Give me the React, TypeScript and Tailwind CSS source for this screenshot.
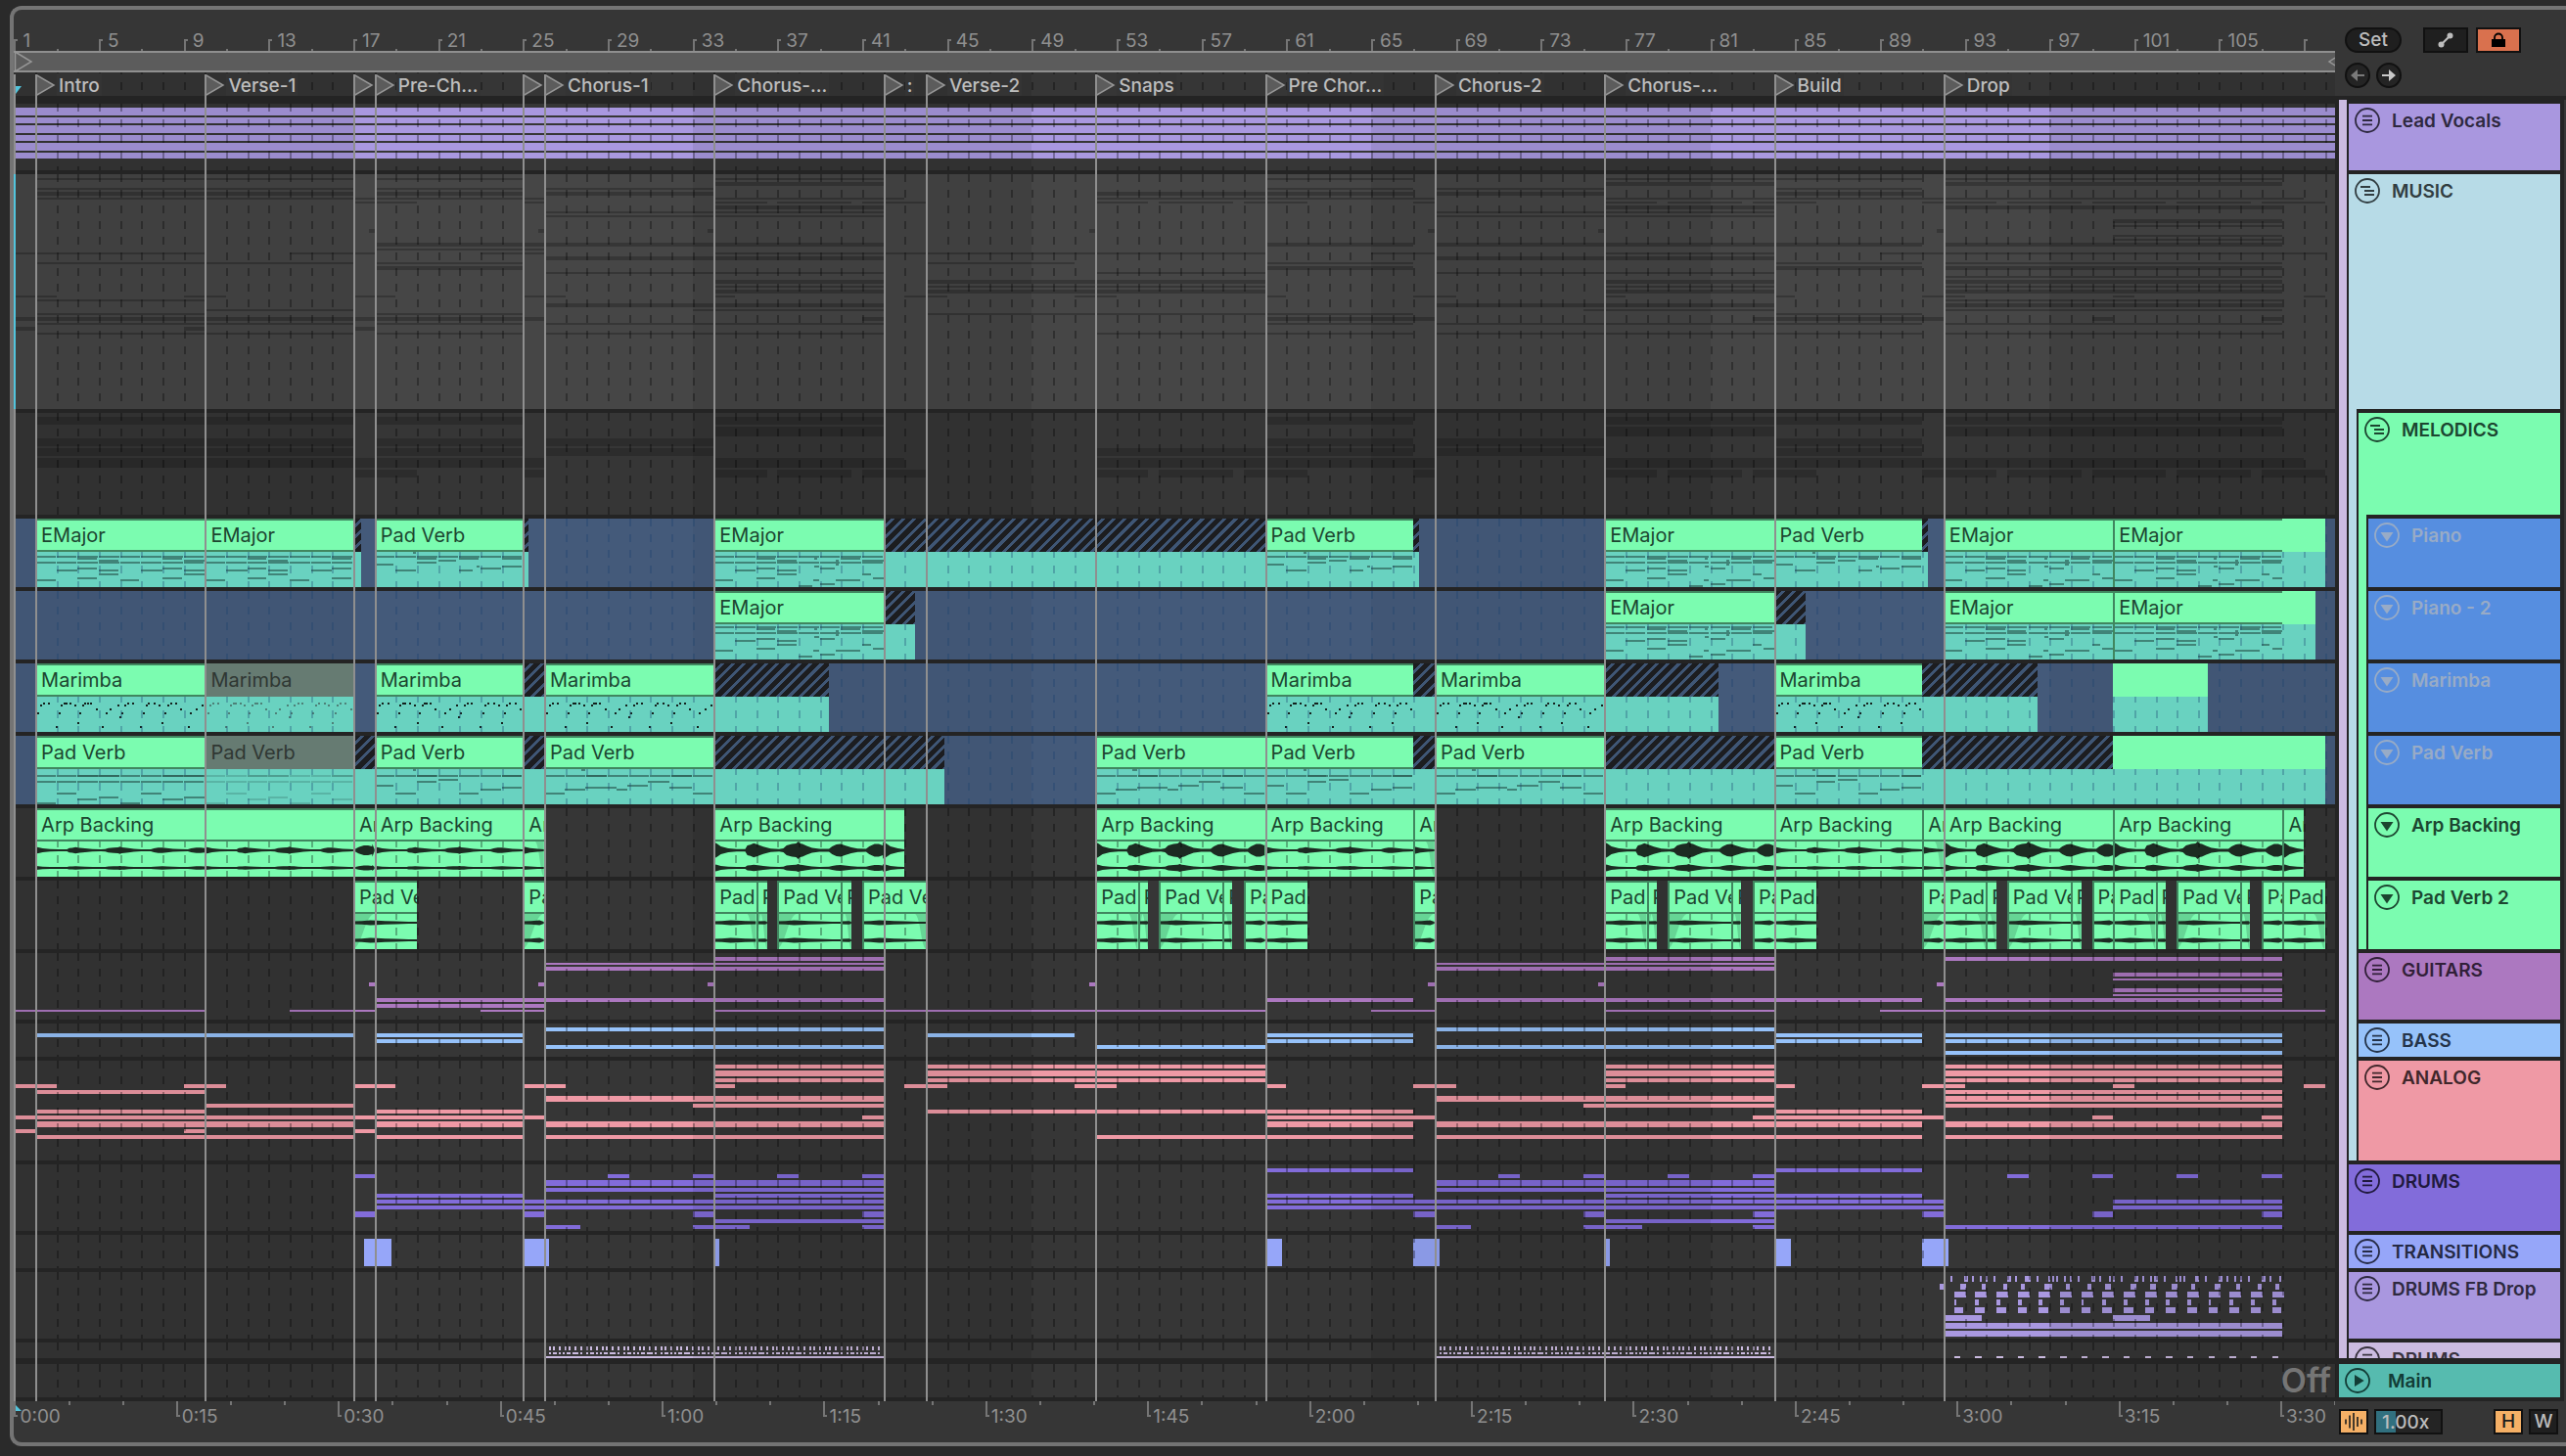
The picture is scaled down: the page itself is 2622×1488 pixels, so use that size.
import React from "react";

type Span = [number, number];
type Row = { y: number; h: number; spans: Span[] };

/* ------------------------------------------------------------------ */
/* Time scale                                                          */
/* ------------------------------------------------------------------ */

const VISIBLE_BARS = 109.49;
const PIXEL_BAR = 1 / 21.664;
const BARS_PER_15_SEC = 7.635;

const at = (bar: number) => `${((bar - 0.98) / VISIBLE_BARS) * 100}%`;
const wide = (bars: number) => `${(bars / VISIBLE_BARS) * 100}%`;
const range = (n: number) => Array.from({ length: n }, (_, i) => i);

const LOCATORS: { bar: number; name: string }[] = [
  { bar: 2, name: "Intro" },
  { bar: 10, name: "Verse-1" },
  { bar: 17, name: "" },
  { bar: 18, name: "Pre-Ch..." },
  { bar: 25, name: "" },
  { bar: 26, name: "Chorus-1" },
  { bar: 34, name: "Chorus-..." },
  { bar: 42, name: ":" },
  { bar: 44, name: "Verse-2" },
  { bar: 52, name: "Snaps" },
  { bar: 60, name: "Pre Chor..." },
  { bar: 68, name: "Chorus-2" },
  { bar: 76, name: "Chorus-..." },
  { bar: 84, name: "Build" },
  { bar: 92, name: "Drop" },
];

const SHADED: Span[] = [
  [0.97, 17],
  [33, 49],
  [65, 81],
  [97, 110.5],
];

/* ------------------------------------------------------------------ */
/* Overview data                                                       */
/* ------------------------------------------------------------------ */

const ALL: Span[] = [[0.97, 110.5]];

const VOCALS: Row[] = [
  { y: 4, h: 8, spans: ALL },
  { y: 14, h: 6, spans: ALL },
  { y: 22, h: 8, spans: ALL },
  { y: 32, h: 6, spans: ALL },
  { y: 40, h: 8, spans: ALL },
  { y: 50, h: 6, spans: ALL },
];

const PV2_SPANS: Span[] = [
  [17, 20], [25, 26], [34, 36.5], [37, 40.5], [41, 44], [52, 54.5], [55, 58.5], [59, 62], [67, 68],
  [76, 78.5], [79, 82.5], [83, 86], [91, 94.5], [95, 98.5], [99, 102.5], [103, 106.5], [107, 110],
];

const MELODICS: Row[] = [
  { y: 4, h: 8, spans: [[2, 17], [18, 25], [34, 42], [60, 67], [76, 91], [92, 108]] },
  { y: 14, h: 10, spans: [[34, 42], [76, 84], [92, 108]] },
  { y: 26, h: 8, spans: [[2, 17], [18, 25], [26, 34], [60, 67], [68, 76], [84, 91]] },
  { y: 36, h: 8, spans: [[2, 17], [18, 25], [26, 34], [52, 67], [68, 76], [84, 91]] },
  { y: 46, h: 10, spans: [[2, 26], [34, 43], [52, 68], [76, 109]] },
  { y: 58, h: 8, spans: PV2_SPANS },
];

const GUITARS: Row[] = [
  { y: 4, h: 4, spans: [[34, 42], [76, 84], [92, 108]] },
  { y: 10, h: 2, spans: [[26, 42], [68, 84]] },
  { y: 14, h: 4, spans: [[26, 42], [68, 84]] },
  { y: 20, h: 4, spans: [[100, 108]] },
  { y: 26, h: 2, spans: [[100, 108]] },
  { y: 30, h: 4, spans: [[17.75, 18], [25.7, 26], [33.7, 34], [51.7, 52], [67.7, 68], [75.7, 76], [91.7, 92]] },
  { y: 36, h: 4, spans: [[100, 108]] },
  { y: 42, h: 2, spans: [[100, 108]] },
  { y: 46, h: 4, spans: [[18, 42], [60, 67], [68, 91], [92, 108]] },
  { y: 52, h: 4, spans: [[18, 26]] },
  { y: 58, h: 2, spans: [[0.97, 10], [14, 18], [23, 26], [34, 60], [65, 68], [76, 84], [89, 110]] },
];

const BASS: Row[] = [
  { y: 4, h: 4, spans: [[26, 42], [68, 84]] },
  { y: 10, h: 4, spans: [[2, 17], [18, 25], [44, 51], [60, 67], [84, 91], [92, 108]] },
  { y: 16, h: 4, spans: [[18, 25], [60, 67], [84, 91], [92, 108]] },
  { y: 22, h: 4, spans: [[26, 42], [52, 60], [68, 84]] },
  { y: 28, h: 4, spans: [[92, 108]] },
];

const LEADS: Span[] = [[34, 42], [44, 60], [76, 84], [92, 108]];

const ANALOG: Row[] = [
  { y: 4, h: 4, spans: LEADS },
  { y: 10, h: 6, spans: LEADS },
  { y: 18, h: 4, spans: LEADS },
  {
    y: 24, h: 4,
    spans: [
      [0.97, 3], [9, 11], [17, 19], [25, 27], [34, 35], [43, 45], [51, 53], [60, 61], [67, 69], [76, 77],
      [84, 85], [91, 93], [100, 101], [109, 110],
    ],
  },
  { y: 30, h: 4, spans: [[2, 10], [92, 108]] },
  { y: 36, h: 6, spans: [[26, 42], [68, 84], [92, 108]] },
  { y: 44, h: 4, spans: [[10, 17], [33, 42], [75, 84], [92, 108]] },
  { y: 50, h: 4, spans: [[2, 10], [18, 25], [44, 67], [84, 91]] },
  { y: 56, h: 4, spans: [[0.97, 26], [41, 42], [60, 68], [83, 92], [99, 100], [107, 108]] },
  { y: 62, h: 6, spans: [[2, 17], [18, 25], [26, 42], [60, 67], [68, 91], [92, 108]] },
  { y: 70, h: 4, spans: [[0.97, 2], [9, 10], [17, 18]] },
  { y: 76, h: 4, spans: [[2, 17], [18, 25], [26, 42], [52, 67], [68, 91], [92, 108]] },
];

const DRUMS: Row[] = [
  { y: 4, h: 4, spans: [[60, 67], [84, 91]] },
  {
    y: 10, h: 4,
    spans: [
      [17, 18], [29, 30], [33, 34], [37, 38], [41, 42], [71, 72], [75, 76], [79, 80], [83, 84], [95, 96],
      [99, 100], [103, 104], [107, 108],
    ],
  },
  { y: 16, h: 6, spans: [[26, 42], [68, 84]] },
  { y: 24, h: 4, spans: [[26, 42], [68, 84]] },
  { y: 30, h: 4, spans: [[18, 25], [34, 42], [60, 67], [76, 91]] },
  { y: 36, h: 4, spans: [[18, 42], [60, 92], [100, 108]] },
  { y: 42, h: 4, spans: [[18, 42], [60, 92], [100, 108]] },
  {
    y: 48, h: 6,
    spans: [[17, 18], [25, 26], [33, 34], [41, 42], [67, 68], [75, 76], [83, 84], [91, 92], [99, 100], [107, 108]],
  },
  { y: 56, h: 4, spans: [[34, 42], [76, 84]] },
  { y: 62, h: 4, spans: [[26, 27.7], [33, 35.7], [41, 42], [68, 69.7], [75, 77.8], [83, 84], [92, 108]] },
];

const TRANSITIONS: Row[] = [
  {
    y: 4, h: 28,
    spans: [[17.5, 18.8], [25, 26.25], [34, 34.25], [60, 60.8], [67, 68.25], [76, 76.25], [84, 84.8], [91, 92.25]],
  },
];

const px = (start: number, list: number[][]): Span[] =>
  list.map(([x, w]) => [start + x * PIXEL_BAR, start + (x + w) * PIXEL_BAR]);

const FB_DROP: Row[] = [
  {
    y: 4, h: 6,
    spans: px(92, [
      [7, 2], [21, 4], [29, 2], [37, 2], [43, 2], [51, 2], [65, 4], [73, 2], [83, 6], [95, 2], [107, 2], [111, 2],
      [115, 2], [123, 2], [129, 2], [137, 2], [151, 4], [159, 2], [169, 2], [173, 2], [181, 2], [195, 4], [203, 2],
      [211, 2], [215, 4], [225, 2], [237, 2], [241, 2], [245, 2], [257, 4], [267, 2], [281, 4], [289, 2], [297, 2],
      [303, 2], [311, 2], [325, 4], [333, 2], [343, 2],
    ]),
  },
  {
    y: 12, h: 6,
    spans: px(92, [
      [-4, 4], [17, 6], [39, 4], [61, 4], [79, 4], [103, 8], [125, 4], [147, 4], [165, 6], [191, 6], [211, 6],
      [233, 6], [253, 4], [277, 6], [299, 4], [321, 4], [339, 4],
    ]),
  },
  { y: 20, h: 6, spans: range(16).map((i): Span => [92.5 + i, 93.05 + i]) },
  { y: 28, h: 6, spans: range(16).map((i): Span => [92.5 + i, (i % 6 === 0 ? 92.6 : 92.68) + i]) },
  { y: 36, h: 6, spans: range(16).map((i): Span => [92.5 + i, 92.95 + i]) },
  { y: 44, h: 6, spans: [[92, 93.8], [100, 101.75]] },
  { y: 52, h: 6, spans: [[92, 108]] },
  { y: 60, h: 6, spans: [[92, 108]] },
];

const hits = (start: number, pattern: number[][]): Span[] =>
  range(9).flatMap((k) =>
    px(start, pattern.map(([x, w]) => [5 + k * 38 + x, w]).filter(([x]) => x < 344))
  );

const TICKS = [[0, 2], [4, 2], [10, 2], [16, 2], [20, 2], [26, 2], [32, 2]];
const DOTS = [[0, 2], [4, 4], [10, 2], [14, 2], [18, 4], [24, 6], [32, 2]];

const DRUMS_2: Row[] = [
  { y: 4, h: 4, spans: [...hits(26, TICKS), ...hits(68, TICKS)] },
  { y: 10, h: 2, spans: [...hits(26, DOTS), ...hits(68, DOTS)] },
  { y: 14, h: 2, spans: [[26, 42], [68, 84], ...range(16).map((i): Span => [92.5 + i, 92.8 + i])] },
];

const MUSIC_OFFSETS: [number, number][] = [
  [4, 2], [8, 4], [14, 2], [18, 4], [24, 2], [28, 2],
  [32, 4], [38, 2], [42, 2], [46, 4], [52, 2], [56, 4], [62, 2], [66, 2], [70, 4], [76, 2], [80, 2],
  [84, 4], [90, 2], [94, 4], [100, 2], [104, 2],
  [108, 4], [114, 2], [118, 4], [124, 2], [128, 2], [132, 4], [138, 2], [142, 2], [146, 4], [152, 2], [156, 4],
  [162, 2],
];

const MUSIC: Row[] = [...MELODICS, ...GUITARS, ...BASS, ...ANALOG].map((row, i) => ({
  y: MUSIC_OFFSETS[i][0],
  h: MUSIC_OFFSETS[i][1],
  spans: row.spans,
}));

/* ------------------------------------------------------------------ */
/* Clip data                                                           */
/* ------------------------------------------------------------------ */

/** A note is [start bar, end bar, y]. */
type Note = [number, number, number];

const eachBar = (from: number, to: number, y: number): Note[] =>
  range(to - from).map((i): Note => [from + i, from + i + 0.95, y]);

const NOTES: Record<string, Note[]> = {
  verse: [
    ...eachBar(0, 8, 4), ...eachBar(0, 8, 10),
    [2, 2.9, 6], [6, 6.9, 6], [3, 3.9, 8], [7, 8, 8], [2, 2.9, 16], [6, 6.9, 16],
    [1, 2, 18], [3, 3.9, 18], [5, 6, 18], [7, 8, 18], [3, 3.9, 22], [7, 8, 22],
    [2, 2.9, 26], [6, 6.9, 26], [0, 0.95, 28], [4, 4.9, 28],
  ],
  chorus: [
    ...eachBar(0, 8, 4), ...eachBar(0, 8, 10),
    [2, 2.9, 6], [4.75, 4.9, 6], [6, 6.9, 6], [3, 3.9, 8], [5.75, 5.9, 8], [7, 8, 8],
    [4.75, 4.95, 14], [5.75, 5.9, 12], [2, 2.9, 16], [5, 5.7, 16], [1, 1.95, 18], [3, 3.9, 18],
    [3, 3.9, 22], [7, 7.4, 22], [2, 2.9, 26], [7.5, 8, 26],
    [0, 0.9, 28], [4.7, 4.95, 28], [5.75, 6.9, 28], [5, 5.7, 32], [4, 4.65, 34],
  ],
  pad: [
    ...eachBar(0, 7, 4), [2, 2.9, 6], [4, 4.9, 6], [6, 6.95, 6], [3, 3.85, 8], [2, 2.9, 10],
    [1.8, 1.95, 0], [0, 0.9, 12], [1, 1.95, 18], [4, 4.65, 18], [4.8, 4.95, 14], [5, 5.95, 16], [6, 6.95, 14],
  ],
  padIntro: [
    ...eachBar(0, 8, 6), ...eachBar(0, 8, 12), [2, 3.95, 6], [6, 8, 6],
    [1, 1.95, 24], [5, 5.95, 24], [2, 2.9, 30], [6, 6.95, 30], [3, 3.9, 28], [7, 8, 28], [0, 0.95, 34], [4, 4.95, 34],
  ],
  padPre: [
    ...eachBar(0, 7, 6), [1.8, 1.95, 0], [2, 2.9, 6], [6, 6.95, 6],
    [3, 3.95, 10], [2, 2.9, 12], [0, 0.9, 16], [1, 1.95, 24], [4, 4.9, 24], [5, 5.95, 20], [6, 6.95, 18],
  ],
  padChorus: [
    ...eachBar(0, 8, 6), [1.75, 1.95, 0], [2, 2.95, 6], [6, 6.95, 6],
    [0, 0.95, 24], [0.95, 1.95, 20], [1.95, 3.4, 18], [3.4, 3.9, 20], [3.9, 4.9, 16], [4.9, 5.9, 12],
    [5.9, 6.95, 18], [7, 7.95, 24],
  ],
};

/** Marimba hits over eight bars: [bar, y]. */
const MARIMBA_HITS: [number, number][] = [
  [0.1, 16], [0.22, 8], [0.35, 6], [0.6, 6], [0.95, 30],
  [1.1, 16], [1.18, 8], [1.32, 6], [1.42, 6], [1.62, 6], [1.85, 8], [1.98, 26],
  [2.08, 16], [2.22, 8], [2.32, 6], [2.42, 6], [2.6, 6], [2.85, 12], [3.15, 30],
  [3.3, 16], [3.5, 12], [3.85, 8], [3.95, 20],
  [4.05, 16], [4.2, 8], [4.35, 6], [4.55, 6], [4.93, 30],
  [5.08, 16], [5.2, 8], [5.32, 6], [5.6, 6], [5.82, 8], [5.97, 26],
  [6.1, 16], [6.22, 8], [6.35, 6], [6.6, 6], [6.85, 12], [7.2, 30],
  [7.3, 16], [7.55, 12], [7.85, 8],
];

type Kind = "clip" | "muted" | "hatch" | "plain";
type Clip = {
  s: number;
  e: number;
  name?: string;
  kind?: Kind;
  notes?: string;
  shift?: number;
  loud?: number;
  phase?: number;
  fadeIn?: number;
  fadeOut?: number;
};

const clip = (s: number, e: number, name: string, notes: string, shift = 0): Clip => ({ s, e, name, notes, shift });
const muted = (s: number, e: number, name: string, notes: string): Clip => ({ s, e, name, notes, kind: "muted" });
const hatch = (s: number, e: number): Clip => ({ s, e, kind: "hatch" });
const plain = (s: number, e: number): Clip => ({ s, e, kind: "plain" });
const arp = (s: number, e: number, loud: number, phase = 0, fadeOut = 0): Clip => ({
  s, e, name: "Arp Backing", loud, phase, fadeOut,
});
const pv = (s: number, e: number, fadeIn = 0, fadeOut = 0): Clip => ({
  s, e, name: "Pad Verb", loud: -1, fadeIn, fadeOut,
});

const PIANO: Clip[] = [
  clip(2, 10, "EMajor", "verse"), clip(10, 17, "EMajor", "verse"), hatch(17, 17.35),
  clip(18, 25, "Pad Verb", "pad"), hatch(25, 25.25),
  clip(34, 42, "EMajor", "chorus"), hatch(42, 60),
  clip(60, 67, "Pad Verb", "pad"), hatch(67, 67.25),
  clip(76, 84, "EMajor", "chorus"), clip(84, 91, "Pad Verb", "pad"), hatch(91, 91.25),
  clip(92, 100, "EMajor", "chorus"), clip(100, 108, "EMajor", "chorus"), plain(108, 110),
];

const PIANO_2: Clip[] = [
  clip(34, 42, "EMajor", "chorus", -2), hatch(42, 43.5),
  clip(76, 84, "EMajor", "chorus", -2), hatch(84, 85.5),
  clip(92, 100, "EMajor", "chorus", -2), clip(100, 108, "EMajor", "chorus", -2), plain(108, 109.55),
];

const MARIMBA: Clip[] = [
  clip(2, 10, "Marimba", "marimba"), muted(10, 17, "Marimba", "marimba"),
  clip(18, 25, "Marimba", "marimba"), hatch(25, 26),
  clip(26, 34, "Marimba", "marimba"), hatch(34, 39.45),
  clip(60, 67, "Marimba", "marimba"), hatch(67, 68),
  clip(68, 76, "Marimba", "marimba"), hatch(76, 81.4),
  clip(84, 91, "Marimba", "marimba"), hatch(91, 96.45), plain(100, 104.45),
];

const PAD_VERB: Clip[] = [
  clip(2, 10, "Pad Verb", "padIntro"), muted(10, 17, "Pad Verb", "padIntro"), hatch(17, 18),
  clip(18, 25, "Pad Verb", "padPre"), hatch(25, 26),
  clip(26, 34, "Pad Verb", "padChorus"), hatch(34, 44.9),
  clip(52, 60, "Pad Verb", "padChorus"), clip(60, 67, "Pad Verb", "padPre"), hatch(67, 68),
  clip(68, 76, "Pad Verb", "padChorus"), hatch(76, 84),
  clip(84, 91, "Pad Verb", "padPre"), hatch(91, 100), plain(100, 110),
];

const ARP: Clip[] = [
  arp(2, 17, 0.35), arp(17, 18, 0.75, 7.1), arp(18, 25, 0.35), arp(25, 26, 0.4, 0, 0.4),
  arp(34, 43, 1), arp(52, 60, 1), arp(60, 67, 0.35), arp(67, 68, 0.4, 0, 0.4),
  arp(76, 84, 1), arp(84, 91, 0.35), arp(91, 92, 0.4, 0, 0.4),
  arp(92, 100, 1), arp(100, 108, 1), arp(108, 109, 1),
];

const PAD_VERB_2: Clip[] = [
  pv(17, 20, 0.95), pv(25, 26, 0.95),
  pv(34, 36, 0, 0.4), pv(36, 36.5, 0.2, 0.3), pv(37, 40, 0.9), pv(40, 40.5, 0.15, 0.3), pv(41, 44, 0, 0.5),
  pv(52, 54, 0, 0.4), pv(54, 54.5, 0.2, 0.3), pv(55, 58, 0.9), pv(58, 58.45, 0.15, 0.3), pv(59, 60), pv(60, 62),
  pv(67, 68, 0.95),
  pv(76, 78, 0, 0.4), pv(78, 78.5, 0.2, 0.3), pv(79, 82, 0.9), pv(82, 82.45, 0.15, 0.3), pv(83, 84), pv(84, 86),
  pv(91, 92, 0.95), pv(92, 94, 0, 0.4), pv(94, 94.5, 0.15, 0.3), pv(95, 98, 0.9), pv(98, 98.5, 0.15, 0.3),
  pv(99, 100), pv(100, 102, 0, 0.4), pv(102, 102.5, 0.2, 0.3), pv(103, 106, 0.9), pv(106, 106.45, 0.15, 0.3),
  pv(107, 108), pv(108, 110, 0, 0.5),
];

/* ------------------------------------------------------------------ */
/* Lane pieces                                                         */
/* ------------------------------------------------------------------ */

function BarGrid({ tone = "bg-black/30", place = "inset-0" }: { tone?: string; place?: string }) {
  return (
    <div
      className={`pointer-events-none absolute ${place} [mask-image:repeating-linear-gradient(to_bottom,#000_0_8px,transparent_8px_16px)]`}
    >
      {range(109).map((i) => (
        <div key={i} className={`absolute inset-y-0 w-0.5 ${tone}`} style={{ left: at(i + 2) }} />
      ))}
    </div>
  );
}

function Shading({ tone = "bg-black/8" }: { tone?: string }) {
  return (
    <>
      {SHADED.map(([s, e]) => (
        <div
          key={s}
          className={`pointer-events-none absolute inset-y-0 ${tone}`}
          style={{ left: at(s), width: wide(e - s) }}
        />
      ))}
    </>
  );
}

function OverviewLane({ height, rows, bar, base = "bg-[#363636]" }: { height: string; rows: Row[]; bar: string; base?: string }) {
  return (
    <div className={`relative overflow-hidden ${height} ${base}`}>
      {rows.map((row) =>
        row.spans.map(([s, e], i) => (
          <div
            key={`${row.y}-${i}`}
            className={`absolute ${bar}`}
            style={{ left: at(s), width: wide(e - s), top: row.y, height: row.h }}
          />
        ))
      )}
      <Shading />
      <BarGrid />
    </div>
  );
}

const SWELL: [number, number][] = [
  [0, 0.95], [0.15, 0.75], [0.35, 0.4], [0.7, 0.15], [1.1, 0.05], [1.5, 0.05], [1.6, 0.5], [1.75, 0.6], [1.9, 0.8],
  [2.1, 0.6], [2.35, 0.35], [2.7, 0.12], [3.1, 0.05], [3.3, 0.15], [3.45, 0.5], [3.7, 0.7], [3.9, 0.75], [4, 1],
  [4.08, 0.75], [4.2, 0.7], [4.4, 0.45], [4.65, 0.2], [5, 0.06], [5.45, 0.08], [5.6, 0.4], [5.8, 0.65], [6, 0.7],
  [6.2, 0.5], [6.5, 0.25], [6.8, 0.1], [7.2, 0.08], [7.35, 0.4], [7.6, 0.7], [7.8, 0.7], [7.99, 0.5],
];
const HUM: [number, number][] = [
  [0, 0.08], [0.4, 0.12], [0.8, 0.2], [1.1, 0.16], [1.5, 0.12], [2, 0.06], [2.6, 0.02], [3, 0.02],
];

function wave(len: number, phase: number, loud: number, mid: number, height: number) {
  const table = loud < 0 ? HUM : SWELL;
  const period = loud < 0 ? 3 : 8;
  const points: [number, number][] = [];
  for (let k = 0; k < 4; k++) {
    for (const [t, a] of table) {
      const x = k * period + t - phase;
      if (x >= 0 && x <= len) points.push([x, 0.9 + a * height * Math.abs(loud)]);
    }
  }
  points.push([len, 1]);
  const upper = points.map(([x, a]) => `${x},${mid - a}`);
  const lower = [...points].reverse().map(([x, a]) => `${x},${mid + a}`);
  return [...upper, ...lower].join(" ");
}

function AudioBody({ c }: { c: Clip }) {
  const len = c.e - c.s;
  const loud = c.loud ?? 0;
  const fi = c.fadeIn ?? 0;
  const fo = c.fadeOut ?? 0;
  return (
    <svg className="block h-full w-full" viewBox={`0 0 ${len} 36`} preserveAspectRatio="none">
      {fi > 0 && (
        <path d={`M0 0H${fi}C${fi * 0.55} 4 ${fi * 0.45} 32 0 36Z`} fill="#66d595" />
      )}
      {fo > 0 && (
        <path d={`M${len} 0H${len - fo}C${len - fo * 0.5} 4 ${len - fo * 0.45} 32 ${len} 36Z`} fill="#66d595" />
      )}
      <polygon points={wave(len, c.phase ?? 0, loud, 9, 8)} fill="#1c2b22" />
      <polygon points={wave(len, c.phase ?? 0, loud, 27, loud < 0 ? 8 : 3)} fill="#1c2b22" />
    </svg>
  );
}

function MidiBody({ c }: { c: Clip }) {
  const len = c.e - c.s;
  const isMuted = c.kind === "muted";
  if (c.notes === "marimba") {
    return (
      <div className="absolute inset-0">
        {MARIMBA_HITS.filter(([t]) => t < len).map(([t, y]) => (
          <div
            key={`${t}-${y}`}
            className={`absolute h-0.5 w-0.5 ${isMuted ? "bg-[#4d8178]" : "bg-[#14211d]"}`}
            style={{ left: `${(t / len) * 100}%`, top: y }}
          />
        ))}
      </div>
    );
  }
  return (
    <div className="absolute inset-0">
      {(NOTES[c.notes ?? ""] ?? [])
        .filter(([s]) => s < len)
        .map(([s, e, y], i) => (
          <div
            key={i}
            className={`absolute h-0.5 ${isMuted ? "bg-[#2b5a52]/25" : "bg-[#2b5a52]/65"}`}
            style={{ left: `${(s / len) * 100}%`, width: `${((e - s) / len) * 100}%`, top: y + (c.shift ?? 0) }}
          />
        ))}
    </div>
  );
}

function ClipHeader({ c }: { c: Clip }) {
  const kind = c.kind ?? "clip";
  const look = {
    clip: "border-y-2 border-[#40865f] bg-[#7bfcb0] text-[#1c4630]",
    muted: "bg-[#667b72] text-[#2f3733]",
    hatch: "bg-[repeating-linear-gradient(135deg,#1c1d20_0_5px,#3f5675_5px_8px)]",
    plain: "bg-[#7bfcb0]",
  }[kind];
  return (
    <div
      className={`absolute top-0 flex h-[34px] items-center overflow-hidden ${look}`}
      style={{ left: at(c.s), width: wide(c.e - c.s) }}
    >
      {c.name && <span className="pl-1.5 text-[20px] leading-none whitespace-nowrap">{c.name}</span>}
    </div>
  );
}

function ClipLane({ clips, frozen }: { clips: Clip[]; frozen: boolean }) {
  return (
    <div className={`relative h-[70px] overflow-hidden ${frozen ? "bg-[#445a7a]" : "bg-[#363636]"}`}>
      <Shading tone={frozen ? "bg-black/4" : "bg-black/8"} />
      {clips.map((c) => (
        <div
          key={c.s}
          className={`absolute bottom-0 h-9 overflow-hidden ${frozen ? "bg-[#69d2c0]" : "bg-[#7bfcb0]"}`}
          style={{ left: at(c.s), width: wide(c.e - c.s) }}
        >
          {frozen ? <MidiBody c={c} /> : <AudioBody c={c} />}
        </div>
      ))}
      <BarGrid tone={frozen ? "bg-[#16406e]/30" : "bg-black/30"} />
      {clips.map((c) => (
        <ClipHeader key={c.s} c={c} />
      ))}
      {clips
        .filter((c) => !c.kind)
        .map((c) => (
          <div key={c.s} className="absolute inset-y-0 w-0.5 bg-[#40865f]" style={{ left: at(c.s) }} />
        ))}
    </div>
  );
}

/* ------------------------------------------------------------------ */
/* Rulers                                                              */
/* ------------------------------------------------------------------ */

function BeatRuler() {
  return (
    <div className="relative h-[42px] overflow-hidden text-[19px] leading-none text-[#8f8f8f]">
      {range(55).map((i) => {
        const bar = 1 + i * 2;
        const major = i % 2 === 0;
        return (
          <div key={bar} className="absolute bottom-0" style={{ left: at(bar) }}>
            {major ? (
              <div className="h-3 w-1 border-t-2 border-l-2 border-[#757575]" />
            ) : (
              <div className="h-0.5 w-0.5 bg-[#757575]" />
            )}
            {major && bar < 109 && <span className="absolute bottom-px left-[9px]">{bar}</span>}
          </div>
        );
      })}
    </div>
  );
}

function LoopBar() {
  return (
    <div className="relative flex h-[22px] items-center justify-between border-y-2 border-[#8f8f8f] bg-[#5c5c5c]">
      <svg className="h-[22px] w-5" viewBox="0 0 20 22">
        <path d="M1.500 1L18 11L1.500 21Z" fill="#5c5c5c" stroke="#969696" strokeWidth="1.500" />
      </svg>
      <svg className="h-[22px] w-2" viewBox="0 0 8 22">
        <path d="M8 7L2 11L8 15" fill="none" stroke="#969696" strokeWidth="1.500" />
      </svg>
    </div>
  );
}

function LocatorRow() {
  return (
    <div className="relative h-6 overflow-hidden bg-[#363636]">
      <Shading />
      <BarGrid place="-top-1.5 bottom-0 inset-x-0" />
      <svg className="absolute bottom-0.5 left-0.5 h-2 w-1.5" viewBox="0 0 6 8">
        <path d="M0 0H6L0 8Z" fill="#52c4dc" />
      </svg>
      {LOCATORS.map(({ bar, name }) => (
        <button key={bar} className="absolute top-0.5 flex h-[22px] items-center" style={{ left: at(bar) }}>
          <svg className="h-[22px] w-[22px]" viewBox="0 0 22 22">
            <path d="M1 0.500L19 11L1 21.500Z" fill="#5c5c5c" stroke="#969696" strokeWidth="1.500" />
          </svg>
          {name && (
            <span className="bg-[#343434] px-0.5 pt-0.5 text-[19px] leading-[22px] font-medium whitespace-nowrap text-[#bdbdbd]">
              {name}
            </span>
          )}
        </button>
      ))}
    </div>
  );
}

function TimeRuler() {
  const last = 42;
  return (
    <div className="relative h-[42px] overflow-hidden text-[19px] leading-none text-[#8f8f8f]">
      <svg className="absolute top-0.5 left-0 h-2 w-2" viewBox="0 0 8 8">
        <path d="M0 0L8 8H0Z" fill="#52c4dc" />
      </svg>
      {range(last + 2).map((i) => {
        const seconds = i * 5;
        const bar = 1 + (i / 3) * BARS_PER_15_SEC;
        const major = i % 3 === 0;
        const label = `${Math.floor(seconds / 60)}:${String(seconds % 60).padStart(2, "0")}`;
        return (
          <div key={i} className="absolute top-0" style={{ left: at(bar) }}>
            {major ? (
              <div className="h-4 w-1 border-b-2 border-l-2 border-[#757575]" />
            ) : (
              <div className="h-1 w-0.5 bg-[#757575]" />
            )}
            {major && <span className="absolute top-[6px] left-[6px]">{label}</span>}
          </div>
        );
      })}
    </div>
  );
}

/* ------------------------------------------------------------------ */
/* Track headers                                                       */
/* ------------------------------------------------------------------ */

type Glyph = "list" | "group" | "fold" | "play";

function TrackIcon({ glyph }: { glyph: Glyph }) {
  return (
    <svg className="h-[26px] w-[26px] flex-none" viewBox="0 0 26 26" fill="none" stroke="currentColor" strokeWidth="1.800">
      <circle cx="13" cy="13" r="12" />
      {glyph === "list" && <path d="M8 8.700H18M8 13H18M8 17.300H18" />}
      {glyph === "group" && <path d="M6 9H16M10 13H20M10 17H20" />}
      {glyph === "fold" && <path d="M6.500 10H19.500L13 19.500Z" fill="currentColor" stroke="none" />}
      {glyph === "play" && <path d="M10 7L19.700 13L10 19Z" fill="currentColor" stroke="none" />}
    </svg>
  );
}

function TrackHeader({ name, glyph, look, gap = "gap-3" }: { name: string; glyph: Glyph; look: string; gap?: string }) {
  return (
    <div className={`overflow-hidden pt-1 pl-1.5 ${look}`}>
      <button className={`flex h-[26px] items-center text-[19px] leading-6 font-semibold whitespace-nowrap ${gap}`}>
        <TrackIcon glyph={glyph} />
        <span className="pt-0.5">{name}</span>
      </button>
    </div>
  );
}

function TrackHeaders() {
  const frozen = "h-[70px] bg-[#568ee0] text-[#98abc6]";
  const green = "h-[70px] bg-[#7bfcb0] text-[#1c4630]";
  return (
    <div className="flex flex-col bg-[#cbbbe0] pl-2">
      <div className="flex flex-col gap-1 bg-[#242424] pt-1 pl-0.5">
        <TrackHeader name="Lead Vocals" glyph="list" look="h-[68px] bg-[#a997df] text-[#2e2940]" />
        <div className="bg-[#b7dbe7] pl-2">
          <div className="-ml-2">
            <TrackHeader name="MUSIC" glyph="group" look="h-[240px] text-[#313d41]" />
          </div>
          <div className="flex flex-col gap-1 bg-[#242424] pt-1 pl-0.5">
            <div className="bg-[#7bfcb0] pl-2">
              <div className="-ml-2">
                <TrackHeader name="MELODICS" glyph="group" look="h-[104px] text-[#1c4630]" />
              </div>
              <div className="flex flex-col gap-1 bg-[#242424] pt-1 pl-0.5">
                <TrackHeader name="Piano" glyph="fold" look={frozen} />
                <TrackHeader name="Piano - 2" glyph="fold" look={frozen} />
                <TrackHeader name="Marimba" glyph="fold" look={frozen} />
                <TrackHeader name="Pad Verb" glyph="fold" look={frozen} />
                <TrackHeader name="Arp Backing" glyph="fold" look={green} />
                <TrackHeader name="Pad Verb 2" glyph="fold" look={green} />
              </div>
            </div>
            <TrackHeader name="GUITARS" glyph="list" look="h-[68px] bg-[#ac78c0] text-[#311f38]" />
            <TrackHeader name="BASS" glyph="list" look="h-[34px] bg-[#96c2fa] text-[#24344a]" />
            <TrackHeader name="ANALOG" glyph="list" look="h-[102px] bg-[#ef99a5] text-[#40272b]" />
          </div>
        </div>
        <TrackHeader name="DRUMS" glyph="list" look="h-[68px] bg-[#826cda] text-[#20193d]" />
        <TrackHeader name="TRANSITIONS" glyph="list" look="h-[34px] bg-[#96a6f9] text-[#252a45]" />
        <TrackHeader name="DRUMS FB Drop" glyph="list" look="h-[68px] bg-[#a997df] text-[#2e2940]" />
        <TrackHeader name="DRUMS" glyph="list" look="h-4 bg-[#cbbbe0] text-[#39333f]" />
      </div>
    </div>
  );
}

function TopControls() {
  return (
    <div className="flex h-[88px] flex-col gap-2.5 pt-[18px] pl-2.5">
      <div className="flex items-center">
        <button className="h-[26px] w-[58px] rounded-full border-2 border-[#111] bg-[#1f1f1f] text-[19px] leading-[22px] font-medium text-[#bdbdbd]">
          Set
        </button>
        <button
          aria-label="Automation mode"
          className="ml-[22px] flex h-[26px] w-[46px] items-center justify-center border-2 border-[#111] bg-[#1f1f1f] text-[#bdbdbd]"
        >
          <svg className="h-4 w-4" viewBox="0 0 16 16" fill="currentColor">
            <circle cx="12.500" cy="3.500" r="3" />
            <circle cx="3.500" cy="12.500" r="3" />
            <path d="M3.500 12.500L12.500 3.500" stroke="currentColor" strokeWidth="2.200" />
          </svg>
        </button>
        <button
          aria-label="Lock envelopes"
          className="ml-2 flex h-[26px] w-[46px] items-center justify-center border-2 border-[#111] bg-[#d9714e]"
        >
          <svg className="h-4 w-4" viewBox="0 0 16 16">
            <path d="M4 8V5.500A4 4 0 0 1 12 5.500V8" fill="none" stroke="#000" strokeWidth="1.800" />
            <rect x="1" y="7" width="14" height="8" fill="#000" />
          </svg>
        </button>
      </div>
      <div className="flex gap-1.5">
        <button
          aria-label="Previous locator"
          className="flex h-[26px] w-[26px] items-center justify-center rounded-full border-2 border-[#111] bg-[#242424] text-[#7a7a7a]"
        >
          <svg className="h-4 w-4" viewBox="0 0 16 16" fill="currentColor">
            <path d="M1 8L8 2V7H15V9H8V14Z" />
          </svg>
        </button>
        <button
          aria-label="Next locator"
          className="flex h-[26px] w-[26px] items-center justify-center rounded-full border-2 border-[#111] bg-[#242424] text-[#c8c8c8]"
        >
          <svg className="h-4 w-4" viewBox="0 0 16 16" fill="currentColor">
            <path d="M15 8L8 2V7H1V9H8V14Z" />
          </svg>
        </button>
      </div>
    </div>
  );
}

function BottomControls() {
  return (
    <div className="flex h-[42px] items-start pt-2 pr-2 pl-1 text-[19px] leading-[22px] font-medium">
      <button
        aria-label="Scroll with playback"
        className="flex h-[26px] w-[30px] items-center justify-center border-2 border-[#111] bg-[#f5b066]"
      >
        <svg className="h-[18px] w-5" viewBox="0 0 20 18" stroke="#1c1c1c" strokeWidth="1.600">
          <path d="M2 6.500V11.500M6 2.500V15.500M10 0V18M14 4V14M18 6.500V11.500" />
        </svg>
      </button>
      <input
        aria-label="Playback speed"
        defaultValue="1.00x"
        className="ml-1.5 h-[26px] w-[70px] border-2 border-[#111] bg-[linear-gradient(to_right,#31707f_0_20px,#242424_20px)] pl-1.5 text-[#bdbdbd] outline-none"
      />
      <button className="ml-auto h-[26px] w-[30px] border-2 border-[#111] bg-[#f5b066] text-[#1c1c1c]">H</button>
      <button className="ml-1.5 h-[26px] w-[30px] border-2 border-[#111] bg-[#1f1f1f] text-[#bdbdbd]">W</button>
    </div>
  );
}

/* ------------------------------------------------------------------ */
/* Page                                                                */
/* ------------------------------------------------------------------ */

export default function App() {
  return (
    <div className="min-h-screen overflow-hidden bg-[#2a2a2a] pt-1.5 pb-2.5 pl-2.5 font-[Inter,'Noto_Sans',sans-serif]">
      <main className="flex rounded-l-xl border-4 border-r-0 border-[#747474] bg-[#363636]">
        <section aria-label="Arrangement" className="relative min-w-0 flex-1">
          <BeatRuler />
          <LoopBar />
          <LocatorRow />
          <div className="flex flex-col gap-1 bg-[#242424] pt-2 pb-1.5">
            <OverviewLane height="h-[68px]" rows={VOCALS} bar="bg-[#a998e0]" />
            <OverviewLane height="h-[240px]" rows={MUSIC} bar="bg-black/22" base="bg-[#464646]" />
            <OverviewLane height="h-[104px]" rows={MELODICS} bar="bg-black/18" />
            <ClipLane clips={PIANO} frozen />
            <ClipLane clips={PIANO_2} frozen />
            <ClipLane clips={MARIMBA} frozen />
            <ClipLane clips={PAD_VERB} frozen />
            <ClipLane clips={ARP} frozen={false} />
            <ClipLane clips={PAD_VERB_2} frozen={false} />
            <OverviewLane height="h-[68px]" rows={GUITARS} bar="bg-[#ac78c0]" />
            <OverviewLane height="h-[34px]" rows={BASS} bar="bg-[#96c2fa]" />
            <OverviewLane height="h-[102px]" rows={ANALOG} bar="bg-[#ef99a5]" />
            <OverviewLane height="h-[68px]" rows={DRUMS} bar="bg-[#826cda]" />
            <OverviewLane height="h-[34px]" rows={TRANSITIONS} bar="bg-[#96a6f9]" />
            <OverviewLane height="h-[68px]" rows={FB_DROP} bar="bg-[#a998e0]" />
            <OverviewLane height="h-4" rows={DRUMS_2} bar="bg-[#cbbbe0]" />
          </div>
          <div className="border-b-4 border-[#242424]">
            <div className="relative flex h-[34px] items-center justify-end bg-[#363636] pr-1">
              <Shading />
              <BarGrid />
              <span className="relative text-[34px] leading-none font-semibold text-[#757575]">Off</span>
            </div>
          </div>
          <div className="pointer-events-none absolute inset-x-0 top-[66px] bottom-[42px]">
            {[{ bar: 1 }, ...LOCATORS].map(({ bar }) => (
              <div key={bar} className="absolute inset-y-0 w-0.5 bg-[#8f8f8f]" style={{ left: at(bar) }} />
            ))}
            <div className="absolute top-[102px] left-0 h-[240px] w-0.5 bg-[#52c4dc]" />
          </div>
          <TimeRuler />
        </section>
        <aside aria-label="Tracks" className="w-[236px] flex-none">
          <TopControls />
          <div className="flex bg-[#242424] pt-1 pl-1">
            <div className="min-w-0 flex-1">
              <TrackHeaders />
              <div className="pt-1.5 pb-1">
                <TrackHeader name="Main" glyph="play" look="h-[34px] bg-[#56bbaf] text-[#123c36]" gap="gap-[18px]" />
              </div>
            </div>
            <div className="ml-1 w-0.5 bg-[#363636]" />
          </div>
          <BottomControls />
        </aside>
      </main>
    </div>
  );
}
